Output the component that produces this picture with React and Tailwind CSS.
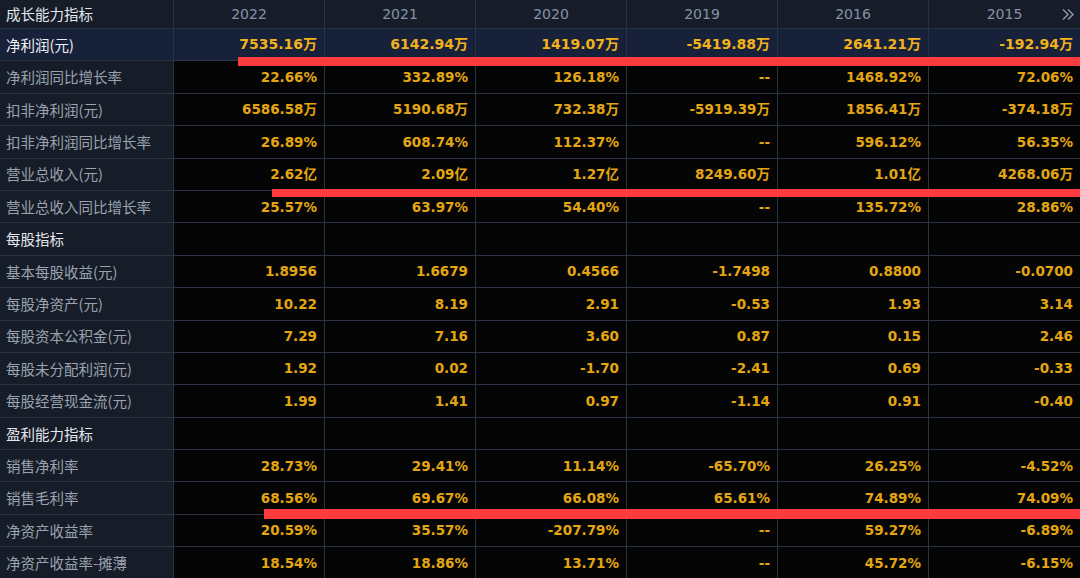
import React from "react";

const years = ["2022", "2021", "2020", "2019", "2016", "2015"];

const rows = [
  { label: "净利润(元)", hl: true, values: ["7535.16万", "6142.94万", "1419.07万", "-5419.88万", "2641.21万", "-192.94万"] },
  { label: "净利润同比增长率", values: ["22.66%", "332.89%", "126.18%", "--", "1468.92%", "72.06%"] },
  { label: "扣非净利润(元)", values: ["6586.58万", "5190.68万", "732.38万", "-5919.39万", "1856.41万", "-374.18万"] },
  { label: "扣非净利润同比增长率", values: ["26.89%", "608.74%", "112.37%", "--", "596.12%", "56.35%"] },
  { label: "营业总收入(元)", values: ["2.62亿", "2.09亿", "1.27亿", "8249.60万", "1.01亿", "4268.06万"] },
  { label: "营业总收入同比增长率", values: ["25.57%", "63.97%", "54.40%", "--", "135.72%", "28.86%"] },
  { label: "每股指标", section: true, values: ["", "", "", "", "", ""] },
  { label: "基本每股收益(元)", values: ["1.8956", "1.6679", "0.4566", "-1.7498", "0.8800", "-0.0700"] },
  { label: "每股净资产(元)", values: ["10.22", "8.19", "2.91", "-0.53", "1.93", "3.14"] },
  { label: "每股资本公积金(元)", values: ["7.29", "7.16", "3.60", "0.87", "0.15", "2.46"] },
  { label: "每股未分配利润(元)", values: ["1.92", "0.02", "-1.70", "-2.41", "0.69", "-0.33"] },
  { label: "每股经营现金流(元)", values: ["1.99", "1.41", "0.97", "-1.14", "0.91", "-0.40"] },
  { label: "盈利能力指标", section: true, values: ["", "", "", "", "", ""] },
  { label: "销售净利率", values: ["28.73%", "29.41%", "11.14%", "-65.70%", "26.25%", "-4.52%"] },
  { label: "销售毛利率", values: ["68.56%", "69.67%", "66.08%", "65.61%", "74.89%", "74.09%"] },
  { label: "净资产收益率", values: ["20.59%", "35.57%", "-207.79%", "--", "59.27%", "-6.89%"] },
  { label: "净资产收益率-摊薄", values: ["18.54%", "18.86%", "13.71%", "--", "45.72%", "-6.15%"] },
];

const cjk = "font-['Noto_Sans_CJK_SC','Noto_Sans',sans-serif]";
const num = "font-['DejaVu_Sans','Noto_Sans_CJK_SC',sans-serif]";

export default function App() {
  return (
    <div className="relative w-[1080px] h-[578px] overflow-hidden bg-[#050505]">
      <div className="grid grid-cols-[174px_repeat(6,151px)]">
        {/* header */}
        <div className={`h-[29px] flex items-center pl-[6px] bg-[#161d29] border-r border-b border-[#2a3341] text-[14.5px] text-[#e4e8ee] ${cjk}`}>
          成长能力指标
        </div>
        {years.map((y, i) => (
          <div
            key={y}
            className={`relative h-[29px] flex items-center justify-center bg-[#161d29] border-b border-[#2a3341] text-[14px] text-[#8592a6] ${num} ${i < 5 ? "border-r" : ""}`}
          >
            {y}
            {i === 5 && (
              <svg className="absolute right-[5px] top-[8px]" width="14" height="13" viewBox="0 0 14 13" fill="none" stroke="#8592a6" strokeWidth="1.6">
                <path d="M2 1.5l5 5-5 5" />
                <path d="M7 1.5l5 5-5 5" />
              </svg>
            )}
          </div>
        ))}

        {rows.map((r) => (
          <React.Fragment key={r.label}>
            <div
              className={`h-[32.4px] flex items-center pl-[6px] border-r border-b border-[#2a3341] text-[14.5px] whitespace-nowrap ${cjk} ${
                r.hl ? "bg-[#18213a] text-[#eef1f6]" : "bg-[#161d29]"
              } ${r.section ? "text-[#e4e8ee]" : r.hl ? "" : "text-[#9aa3af]"}`}
            >
              {r.label}
            </div>
            {r.values.map((v, i) => (
              <div
                key={i}
                className={`h-[32.4px] flex items-center justify-end pr-[7px] border-b border-[#2a3341] font-bold whitespace-nowrap ${num} ${
                  r.hl ? "bg-[#18213a] text-[14px] text-[#f2b21b]" : "bg-[#050505] text-[13.5px] text-[#e3a512]"
                } ${i < 5 ? "border-r" : ""}`}
              >
                {v}
              </div>
            ))}
          </React.Fragment>
        ))}
      </div>

      {/* red markup lines */}
      <div className="absolute left-[238px] right-0 top-[57px] h-[9px] bg-[#ff3b3f]" />
      <div className="absolute left-[272px] right-0 top-[189px] h-[8px] bg-[#ff3b3f]" />
      <div className="absolute left-[264px] right-0 top-[509px] h-[10px] bg-[#ff3b3f]" />
    </div>
  );
}
